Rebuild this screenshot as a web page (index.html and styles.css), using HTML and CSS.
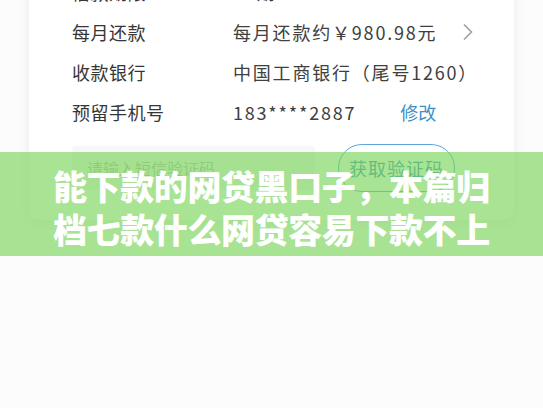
FILE: index.html
```html
<!DOCTYPE html>
<html>
  <head>
    <meta charset='utf-8' />
    <title>能下款的网贷黑口子</title>
    <link rel="stylesheet" href="styles.css">
  </head>
  <body>
    <main>
      <div class='card'>
        <div class='row'>
          <div class='label'>借款期限</div>
          <div class='value'>12期</div>
        </div>
        <div class='row'>
          <div class='label'>每月还款</div>
          <div class='value'>每月还款约￥980.98元</div>
          <svg class='chevron' width='12' height='18' viewBox='0 0 12 18'>
            <path d='M2 1.5 L9.5 9 L2 16.5' fill='none' stroke='#a0a0a0' stroke-width='1.6' />
          </svg>
        </div>
        <div class='row'>
          <div class='label'>收款银行</div>
          <div class='value'>中国工商银行（尾号1260）</div>
        </div>
        <div class='row'>
          <div class='label'>预留手机号</div>
          <div class='value'>183****2887</div>
          <a class='edit'>修改</a>
        </div>
        <div class='code-row'>
          <div class='code-input'>请输入短信验证码</div>
          <button class='code-btn'>获取验证码</button>
        </div>
      </div>
    </main>
    <section class='banner'>
      <h1>能下款的网贷黑口子，本篇归档七款什么网贷容易下款不上</h1>
    </section>
  </body>
</html>
```

FILE: styles.css
```css
* {
  box-sizing: border-box;
}
body, html {
  margin: 0;
  padding: 0;
  width: 543px;
  height: 408px;
  overflow: hidden;
}
body {
  position: relative;
  background: #fcfcfc;
  font-family: "Noto Sans CJK SC", "Noto Sans", sans-serif;
}
main {
  padding: 0 29px 0 29px;
}
.card {
  margin-top: -28px;
  width: 485px;
  background: #fff;
  border-radius: 0 0 10px 10px;
  box-shadow: 0 2px 14px rgba(0, 0, 0, 0.07);
  padding: 0 0 28px 43px;
}
.row {
  display: flex;
  align-items: center;
  height: 40px;
  font-size: 18px;
  color: #363636;
}
.label {
  width: 161px;
  letter-spacing: 0.5px;
}
.value {
  color: #404040;
  letter-spacing: 1.8px;
}
.chevron {
  margin-left: 25px;
}
.edit {
  margin-left: 44px;
  color: #3d8fc6;
  font-size: 18px;
}
.code-row {
  display: flex;
  align-items: center;
  margin-top: 12px;
}
.code-input {
  width: 243px;
  height: 44px;
  background: #f7f7f7;
  border-radius: 4px;
  color: #b8b8b8;
  font-size: 16px;
  padding-left: 15px;
  display: flex;
  align-items: center;
}
.code-btn {
  margin-left: 23px;
  width: 117px;
  height: 48px;
  border: 1.5px solid #5ea6d6;
  border-radius: 24px;
  background: #fff;
  color: #3d8fc6;
  font-family: inherit;
  font-size: 18px;
  letter-spacing: 1px;
  padding: 0;
}
.banner {
  position: absolute;
  left: 0;
  top: 152px;
  width: 543px;
  height: 104px;
  background: rgba(121, 213, 90, 0.65);
  padding: 12px 40px 0 53px;
}
.banner h1 {
  margin: 0;
  color: #fff;
  font-size: 34px;
  letter-spacing: -0.4px;
  line-height: 43px;
  font-weight: 900;
}
```
